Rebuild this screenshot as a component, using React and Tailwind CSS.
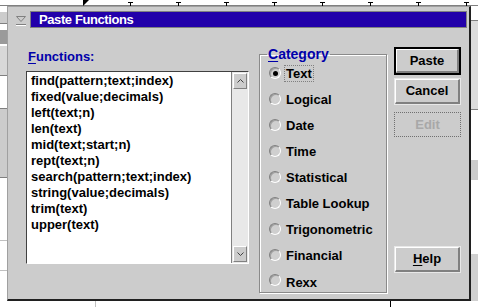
const functions = [
  'find(pattern;text;index)',
  'fixed(value;decimals)',
  'left(text;n)',
  'len(text)',
  'mid(text;start;n)',
  'rept(text;n)',
  'search(pattern;text;index)',
  'string(value;decimals)',
  'trim(text)',
  'upper(text)',
]

const categories = ['Text', 'Logical', 'Date', 'Time', 'Statistical', 'Table Lookup', 'Trigonometric', 'Financial', 'Rexx']

const ticks = [130, 178, 226, 274, 322, 370, 418, 466]

function Radio({ checked }) {
  return (
    <div className="w-[12px] h-[12px] rounded-full border border-t-[#808080] border-l-[#808080] border-b-white border-r-white bg-[#cfcfcf] flex items-center justify-center shrink-0 shadow-[inset_1px_1px_0_#a0a0a0]">
      {checked && <div className="w-[5px] h-[5px] rounded-full bg-black" />}
    </div>
  )
}

function Arrow({ up }) {
  return (
    <div className="h-[16px] w-full bg-[#cccccc] border border-t-white border-l-white border-b-[#808080] border-r-[#808080] flex items-center justify-center">
      <svg width="7" height="4" viewBox="0 0 7 4">
        <path d={up ? 'M0.5 3.5 L3.5 0.5 L6.5 3.5' : 'M0.5 0.5 L3.5 3.5 L6.5 0.5'} fill="none" stroke="#404040" strokeWidth="1" />
      </svg>
    </div>
  )
}

function PushButton({ children, isDefault, disabled }) {
  if (disabled) {
    return (
      <div className="h-[25px] border border-dotted border-[#707070] flex items-center justify-center text-[13px] font-bold text-[#a8a8a8]">
        {children}
      </div>
    )
  }
  return (
    <div className={isDefault ? 'h-[28px] border-2 border-black' : 'h-[27px] border border-[#e8e8e8]'}>
      <div className="h-full bg-[#cccccc] border border-t-white border-l-white border-b-[#808080] border-r-[#808080] border-b-2 border-r-2 flex items-center justify-center text-[13px] font-bold text-black">
        {children}
      </div>
    </div>
  )
}

export default function App() {
  return (
    <div className="relative w-[478px] h-[307px] bg-white overflow-hidden font-['Liberation_Sans',Arial,sans-serif]">
      {/* background: spreadsheet behind the dialog */}
      <div className="absolute left-0 top-[5px] w-full h-px bg-[#808080]" />
      <svg className="absolute left-[83px] top-0" width="6" height="6" viewBox="0 0 6 6">
        <path d="M0 0 H6 L0 6 Z" fill="#000" />
      </svg>
      {ticks.map((x) => (
        <div key={x} className="absolute top-[2px] w-[5px] h-[3px] border-t border-black" style={{ left: x - 2 }}>
          <div className="mx-auto w-px h-[3px] bg-black" />
        </div>
      ))}
      <div className="absolute left-0 top-[12px] w-[7px] h-[12px] bg-[#cccccc] border-b border-[#808080]" />
      <div className="absolute left-0 top-[30px] w-[7px] h-[14px] bg-[#9a9a9a]" />
      <div className="absolute left-0 top-[46px] w-[7px] h-[30px] bg-[#d8d8d8] border-b border-[#808080]" />
      <div className="absolute left-0 top-[108px] w-[7px] h-[70px] bg-[#cccccc] border-y border-[#808080]" />
      <div className="absolute left-0 top-[240px] w-[7px] h-px bg-[#c0c0c0]" />
      <div className="absolute left-0 top-[270px] w-[7px] h-px bg-[#c0c0c0]" />
      <div className="absolute left-[95px] top-[301px] w-px h-[6px] bg-[#c0c0c0]" />
      <div className="absolute left-[390px] top-[301px] w-px h-[6px] bg-black" />
      <div className="absolute left-[471px] top-[20px] w-[7px] h-[90px] bg-[#dcdcdc] border-y border-[#808080]" />
      <div className="absolute left-[471px] top-[160px] w-[7px] h-[20px] bg-[#cccccc]" />
      <div className="absolute left-[471px] top-[254px] w-[7px] h-[47px] bg-[#d0d0d0]" />

      {/* dialog window */}
      <div className="absolute left-[7px] top-[6px] w-[464px] h-[295px] bg-[#cccccc] border border-[#a0a0a0] border-r-2 border-b-2 border-r-[#202020] border-b-[#202020] flex flex-col">
        <div className="flex items-center h-[17px] mt-[4px] pl-[6px] pr-[2px] gap-[3px]">
          <div className="w-[13px] h-[13px] flex items-center justify-center">
            <svg width="12" height="12" viewBox="0 0 12 12">
              <path d="M1.5 2.5 H10.5 L6 7.5 Z" fill="none" stroke="#808080" />
              <path d="M1 10.5 H11" stroke="#808080" />
              <path d="M1 11.5 H11" stroke="#ffffff" />
            </svg>
          </div>
          <div className="flex-1 h-full bg-[#2200aa] border border-[#808080] flex items-center pl-[8px] text-white text-[13px] tracking-[-0.4px] font-bold">
            Paste Functions
          </div>
        </div>

        <div className="flex pl-[18px] mt-[19px]">
          <div className="w-[223px] flex flex-col mt-[2px]">
            <div className="text-[13px] font-bold text-[#0000aa] leading-[16px] ml-[2px]">
              <span className="underline underline-offset-2">F</span>unctions:
            </div>
            <div className="mt-[6px] h-[193px] border border-t-[#404040] border-l-[#404040] border-b-white border-r-white bg-white flex">
              <div className="flex-1 pl-[4px] pt-[1px]">
                {functions.map((f) => (
                  <div key={f} className="h-[16px] leading-[16px] text-[13px] font-bold text-black whitespace-nowrap">{f}</div>
                ))}
              </div>
              <div className="w-[17px] border-l border-[#808080] bg-[#e8e8e8] flex flex-col justify-between p-px">
                <Arrow up />
                <Arrow />
              </div>
            </div>
          </div>

          <fieldset className="ml-[10px] w-[128px] h-[246px] border border-[#8a8a8a] shadow-[inset_1px_1px_0_white,1px_1px_0_white] pl-[9px] pr-[4px] pt-0">
            <legend className="text-[14px] font-bold text-[#0000aa] leading-[14px] px-px ml-[-2px]">
              <span className="underline underline-offset-2">C</span>ategory
            </legend>
            <div className="flex flex-col -mt-[1px]">
              {categories.map((c, i) => (
                <div key={c} className={i === categories.length - 1 ? 'h-[22px] flex items-start pt-[6px] gap-[3px]' : 'h-[26px] flex items-center gap-[3px]'}>
                  <Radio checked={i === 0} />
                  <span className={i === 0 ? 'text-[13px] leading-[15px] font-bold text-black px-px border border-dotted border-[#808080]' : 'text-[13px] leading-[15px] font-bold text-black px-px border border-transparent'}>
                    {c}
                  </span>
                </div>
              ))}
            </div>
          </fieldset>

          <div className="ml-[7px] w-[67px] flex flex-col">
            <PushButton isDefault>Paste</PushButton>
            <div className="mt-[3px]">
              <PushButton>Cancel</PushButton>
            </div>
            <div className="mt-[7px]">
              <PushButton disabled>Edit</PushButton>
            </div>
            <div className="mt-[109px]">
              <PushButton>
                <span><span className="underline underline-offset-2">H</span>elp</span>
              </PushButton>
            </div>
          </div>
        </div>
      </div>
    </div>
  )
}
